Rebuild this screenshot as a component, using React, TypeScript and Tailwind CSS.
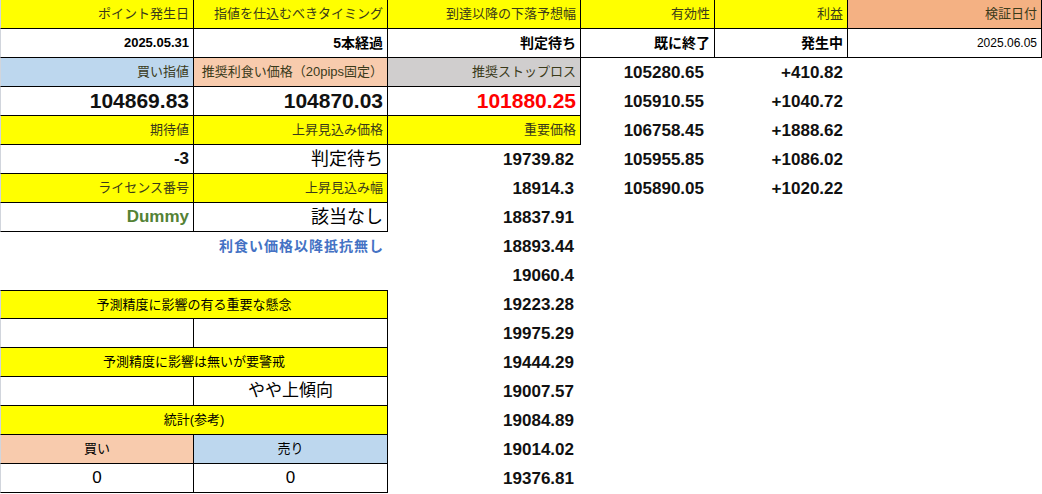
import React from "react";

const Y = "bg-[#ffff00]";
const B = "border-r border-b border-black";
const F = { fontFamily: '"Liberation Sans", Arial, "Noto Sans CJK JP", sans-serif' };

function C({ c = "", children }: { c?: string; children?: React.ReactNode }) {
  return <div className={`flex items-center overflow-hidden whitespace-nowrap ${c}`}>{children}</div>;
}

const col3 = ["19739.82", "18914.3", "18837.91", "18893.44", "19060.4", "19223.28", "19975.29", "19444.29", "19007.57", "19084.89", "19014.02", "19376.81"];

export default function App() {
  const hdr = "justify-end pr-1 text-[13px] text-[#3a3a1a]";
  const big = "justify-end pr-1 text-[21px] font-bold text-[#111]";
  const num = "justify-end text-[17px] font-bold text-[#111]";
  const c3 = (i: number) => <C c={`${num} pr-[7px]`}>{col3[i]}</C>;
  const rowCls = "grid grid-cols-[194px_194px_193px_134px_133px_194px] h-[29px]";
  return (
    <div style={F} className="w-[1042px] h-[494px] bg-white overflow-hidden">
      <div className={rowCls}>
        <C c={`${Y} ${B} border-l border-l-gray-300 ${hdr}`}>ポイント発生日</C>
        <C c={`${Y} ${B} ${hdr}`}>指値を仕込むべきタイミング</C>
        <C c={`${Y} ${B} ${hdr}`}>到達以降の下落予想幅</C>
        <C c={`${Y} ${B} ${hdr}`}>有効性</C>
        <C c={`${Y} ${B} ${hdr}`}>利益</C>
        <C c={`bg-[#f4b183] ${B} ${hdr}`}>検証日付</C>
      </div>
      <div className={rowCls}>
        <C c={`${B} border-l border-l-gray-300 justify-end pr-1 text-[13px] font-bold`}>2025.05.31</C>
        <C c={`${B} justify-end pr-1 text-[14px] font-bold`}>5本経過</C>
        <C c={`${B} justify-end pr-1 text-[14px] font-bold`}>判定待ち</C>
        <C c={`${B} justify-end pr-1 text-[14px] font-bold`}>既に終了</C>
        <C c={`${B} justify-end pr-1 text-[14px] font-bold`}>発生中</C>
        <C c={`${B} justify-end pr-1 text-[12px]`}>2025.06.05</C>
      </div>
      <div className={rowCls}>
        <C c={`bg-[#bdd7ee] ${B} border-l border-l-gray-300 ${hdr}`}>買い指値</C>
        <C c={`bg-[#f8cbad] ${B} ${hdr}`}>推奨利食い価格（20pips固定）</C>
        <C c={`bg-[#d0cece] ${B} ${hdr}`}>推奨ストップロス</C>
        <C c={`${num} pr-[11px]`}>105280.65</C>
        <C c={`${num} pr-[5px]`}>+410.82</C>
        <C />
      </div>
      <div className={rowCls}>
        <C c={`${B} border-l border-l-gray-300 ${big}`}>104869.83</C>
        <C c={`${B} ${big}`}>104870.03</C>
        <C c={`${B} ${big} text-[#ff0000]`}>101880.25</C>
        <C c={`${num} pr-[11px]`}>105910.55</C>
        <C c={`${num} pr-[5px]`}>+1040.72</C>
        <C />
      </div>
      <div className={rowCls}>
        <C c={`${Y} ${B} border-l border-l-gray-300 ${hdr}`}>期待値</C>
        <C c={`${Y} ${B} ${hdr}`}>上昇見込み価格</C>
        <C c={`${Y} ${B} ${hdr}`}>重要価格</C>
        <C c={`${num} pr-[11px]`}>106758.45</C>
        <C c={`${num} pr-[5px]`}>+1888.62</C>
        <C />
      </div>
      <div className={rowCls}>
        <C c={`${B} border-l border-l-gray-300 ${num} pr-1`}>-3</C>
        <C c={`${B} justify-end pr-1 text-[18px]`}>判定待ち</C>
        {c3(0)}
        <C c={`${num} pr-[11px]`}>105955.85</C>
        <C c={`${num} pr-[5px]`}>+1086.02</C>
        <C />
      </div>
      <div className={rowCls}>
        <C c={`${Y} ${B} border-l border-l-gray-300 ${hdr} text-[12px]`}>ライセンス番号</C>
        <C c={`${Y} ${B} ${hdr} text-[12px]`}>上昇見込み幅</C>
        {c3(1)}
        <C c={`${num} pr-[11px]`}>105890.05</C>
        <C c={`${num} pr-[5px]`}>+1020.22</C>
        <C />
      </div>
      <div className={rowCls}>
        <C c={`${B} border-l border-l-gray-300 justify-end pr-1 text-[17px] font-bold text-[#548235]`}>Dummy</C>
        <C c={`${B} justify-end pr-1 text-[18px]`}>該当なし</C>
        {c3(2)}
      </div>
      <div className={rowCls}>
        <C c="col-span-2 justify-end pr-1 text-[14px] font-bold text-[#4472c4] tracking-[1px]">利食い価格以降抵抗無し</C>
        {c3(3)}
      </div>
      <div className={rowCls}>
        <C c="col-span-2" />
        {c3(4)}
      </div>
      <div className={rowCls}>
        <C c={`col-span-2 ${Y} ${B} border-t border-l border-l-gray-300 justify-center text-[13px]`}>予測精度に影響の有る重要な懸念</C>
        {c3(5)}
      </div>
      <div className={rowCls}>
        <C c={`${B} border-l border-l-gray-300`} />
        <C c={B} />
        {c3(6)}
      </div>
      <div className={rowCls}>
        <C c={`col-span-2 ${Y} ${B} border-l border-l-gray-300 justify-center text-[13px]`}>予測精度に影響は無いが要警戒</C>
        {c3(7)}
      </div>
      <div className={rowCls}>
        <C c={`${B} border-l border-l-gray-300`} />
        <C c={`${B} justify-center text-[17px]`}>やや上傾向</C>
        {c3(8)}
      </div>
      <div className={rowCls}>
        <C c={`col-span-2 ${Y} ${B} border-l border-l-gray-300 justify-center text-[13px]`}>統計(参考)</C>
        {c3(9)}
      </div>
      <div className={rowCls}>
        <C c={`bg-[#f8cbad] ${B} border-l border-l-gray-300 justify-center text-[13px]`}>買い</C>
        <C c={`bg-[#bdd7ee] ${B} justify-center text-[13px]`}>売り</C>
        {c3(10)}
      </div>
      <div className={rowCls}>
        <C c={`${B} border-l border-l-gray-300 justify-center text-[17px]`}>0</C>
        <C c={`${B} justify-center text-[17px]`}>0</C>
        {c3(11)}
      </div>
    </div>
  );
}
